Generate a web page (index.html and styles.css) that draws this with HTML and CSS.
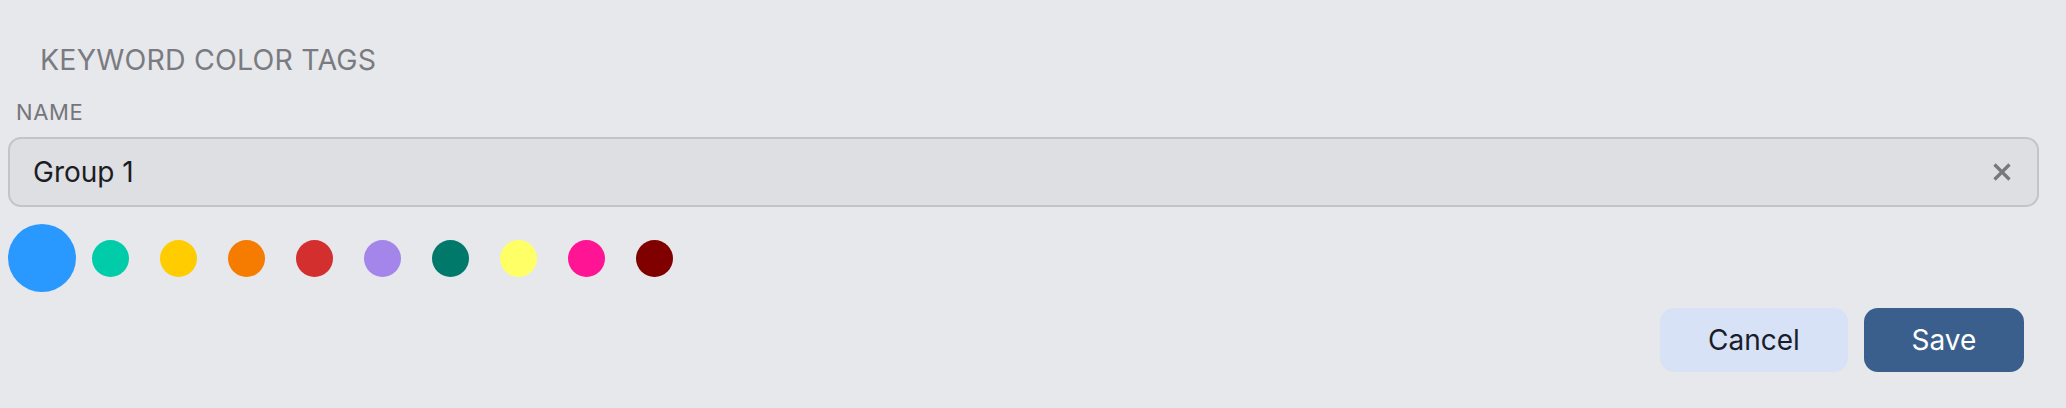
FILE: index.html
```html
<!DOCTYPE html>
<html lang="en">

<head>
    <meta charset="UTF-8">
    <meta name="viewport" content="width=device-width, initial-scale=1.0">
    <title>Keyword Color Tags</title>
    <link rel="stylesheet" href="styles.css">
</head>

<body>

    <div class="panel">
        <h2 class="title">Keyword Color Tags</h2>

        <label class="field-label" for="group-name">Name</label>
        <div class="input-wrap">
            <input id="group-name" class="text-input" type="text" value="Group 1">
            <button class="clear-btn" aria-label="Clear">
                <svg width="18" height="18" viewBox="0 0 18 18">
                    <path d="M1.5 1.5 L16.5 16.5 M16.5 1.5 L1.5 16.5" stroke="#77787c" stroke-width="3.2" fill="none" />
                </svg>
            </button>
        </div>

        <div class="swatches">
            <span class="swatch selected"><i style="background:#2a99ff"></i></span>
            <span class="swatch"><i style="background:#00ccaa"></i></span>
            <span class="swatch"><i style="background:#ffcc00"></i></span>
            <span class="swatch"><i style="background:#f57c00"></i></span>
            <span class="swatch"><i style="background:#d32f2f"></i></span>
            <span class="swatch"><i style="background:#a485ea"></i></span>
            <span class="swatch"><i style="background:#00796b"></i></span>
            <span class="swatch"><i style="background:#ffff66"></i></span>
            <span class="swatch"><i style="background:#ff1493"></i></span>
            <span class="swatch"><i style="background:#800000"></i></span>
        </div>

        <div class="actions">
            <button class="btn btn-cancel">Cancel</button>
            <button class="btn btn-save">Save</button>
        </div>
    </div>

</body>

</html>
```

FILE: styles.css
```css
body {
    font-family: Inter, "Noto Sans", sans-serif;
    margin: 0;
    padding: 0;
    background-color: #e7e8ec;
}

.panel {
    padding: 43px 27px 0 8px;
}

.title {
    margin: 0 0 0 32px;
    font-size: 28.5px;
    font-weight: 400;
    line-height: 34px;
    letter-spacing: 0.2px;
    text-transform: uppercase;
    color: #7a7b80;
}

.field-label {
    display: block;
    margin: 22px 0 0 8px;
    font-size: 22px;
    line-height: 26px;
    letter-spacing: 0.6px;
    text-transform: uppercase;
    color: #75767b;
}

.input-wrap {
    display: flex;
    align-items: center;
    margin-top: 12px;
    height: 70px;
    box-sizing: border-box;
    border: 2px solid #c3c4c9;
    border-radius: 13px;
    background-color: #dedfe3;
}

.text-input {
    flex: 1;
    border: none;
    outline: none;
    background: transparent;
    padding: 0 0 0 23px;
    font-family: inherit;
    font-size: 28px;
    color: #1c1d22;
}

.clear-btn {
    display: flex;
    border: none;
    background: transparent;
    padding: 0;
    margin-right: 26px;
}

.swatches {
    display: flex;
    margin-top: 17px;
}

.swatch {
    display: flex;
    align-items: center;
    justify-content: center;
    width: 68px;
    height: 68px;
}

.swatch i {
    width: 37px;
    height: 37px;
    border-radius: 50%;
}

.swatch.selected i {
    width: 68px;
    height: 68px;
}

.actions {
    display: flex;
    justify-content: flex-end;
    gap: 16px;
    margin: 16px 15px 0 0;
}

.btn {
    height: 64px;
    border: none;
    border-radius: 14px;
    font-family: inherit;
    font-size: 28px;
}

.btn-cancel {
    width: 188px;
    background-color: #d8e2f7;
    color: #1a1e2a;
}

.btn-save {
    width: 160px;
    background-color: #3b5f8d;
    color: #fff;
}
```
